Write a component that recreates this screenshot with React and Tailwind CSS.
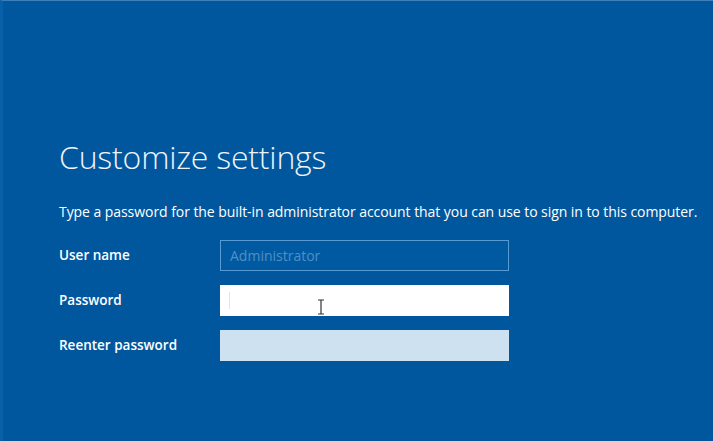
export default function App() {
  return (
    <div className="relative w-[713px] h-[441px] overflow-hidden bg-[#00579e] border-t border-[#3d7fb8] border-l-[3px] border-l-[#0760a8]" style={{ fontFamily: '"Open Sans", "Segoe UI", sans-serif' }}>
      <div className="pl-[56px] pt-[136px]">
        <h1 className="text-[32px] leading-[40px] font-light text-[#eef4fa] tracking-[-0.2px]">Customize settings</h1>
        <p className="mt-[25px] text-[14px] leading-[20px] text-white tracking-[-0.06px]">Type a password for the built-in administrator account that you can use to sign in to this computer.</p>
        <div className="mt-[18px] flex flex-col gap-[14px]">
          <div className="flex items-center">
            <label className="w-[161px] text-[13.5px] font-semibold text-white">User name</label>
            <div className="w-[289px] h-[31px] border border-[#5a9ad2] bg-[#005aa2] flex items-center px-[9px] text-[14px] text-[#4f8fc7]">Administrator</div>
          </div>
          <div className="flex items-center">
            <label className="w-[161px] text-[13.5px] font-semibold text-white">Password</label>
            <div className="relative w-[289px] h-[31px] bg-white">
              <div className="absolute left-[9px] top-[7px] w-px h-[17px] bg-[#e4e4e4]" />
              <svg className="absolute left-[97px] top-[14px]" width="8" height="16" viewBox="0 0 8 16">
                <path d="M1 1h6M4 1v14M1 15h6" stroke="#333" strokeWidth="1.2" fill="none" />
              </svg>
            </div>
          </div>
          <div className="flex items-center">
            <label className="w-[161px] text-[13.5px] font-semibold text-white">Reenter password</label>
            <div className="w-[289px] h-[31px] bg-[#cde1f1]" />
          </div>
        </div>
      </div>
    </div>
  );
}
